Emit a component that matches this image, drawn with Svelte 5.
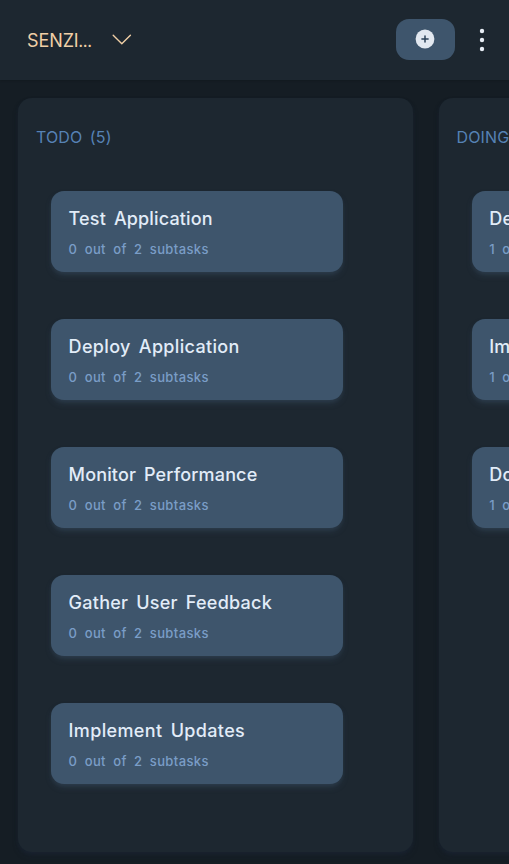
<script>
  const columns = [
    {
      title: 'TODO (5)',
      tasks: [
        { name: 'Test Application', done: 0, tracking: 0.15 },
        { name: 'Deploy Application', done: 0, tracking: 0.33 },
        { name: 'Monitor Performance', done: 0, tracking: 0.15 },
        { name: 'Gather User Feedback', done: 0, tracking: 0.24 },
        { name: 'Implement Updates', done: 0, tracking: 0.36 }
      ]
    },
    {
      title: 'DOING (3)',
      tasks: [
        { name: 'Design', done: 1, tracking: 0.2 },
        { name: 'Implement', done: 1, tracking: 0.2 },
        { name: 'Document', done: 1, tracking: 0.2 }
      ]
    }
  ];
</script>

<div class="app">
  <header>
    <button class="board">
      <span class="name">SENZI<span class="dots">…</span></span>
      <svg width="20" height="12" viewBox="0 0 20 12" fill="none" stroke="currentColor" stroke-width="1.4" stroke-linecap="round" stroke-linejoin="round">
        <path d="M1.2 1.2 9.8 9.7 18.4 1.2" />
      </svg>
    </button>
    <div class="actions">
      <button class="add" aria-label="Add task">
        <svg width="20" height="20" viewBox="0 0 20 20">
          <circle cx="10" cy="10" r="9.4" fill="#e2e8f0" />
          <path d="M10 6.9v6.2M6.9 10h6.2" stroke="#2b4057" stroke-width="1.5" stroke-linecap="round" />
        </svg>
      </button>
      <button class="more" aria-label="More options">
        <svg width="6" height="24" viewBox="0 0 6 24" fill="#e8eef6">
          <circle cx="3" cy="3" r="2.2" />
          <circle cx="3" cy="12" r="2.2" />
          <circle cx="3" cy="21" r="2.2" />
        </svg>
      </button>
    </div>
  </header>
  <main>
    {#each columns as column}
      <section>
        <h2>{column.title}</h2>
        <div class="tasks">
          {#each column.tasks as task}
            <article>
              <h3 style="letter-spacing: {task.tracking}px">{task.name}</h3>
              <p>{task.done} out of 2 subtasks</p>
            </article>
          {/each}
        </div>
      </section>
    {/each}
  </main>
</div>

<style>
  :global(body) {
    margin: 0;
    background: #151d24;
  }
  .app {
    height: 864px;
    overflow: hidden;
    display: flex;
    flex-direction: column;
    background: #151d24;
    font-family: Inter, 'Liberation Sans', sans-serif;
  }
  header {
    box-sizing: border-box;
    height: 80px;
    flex: none;
    display: flex;
    align-items: center;
    justify-content: space-between;
    padding: 0 24px 1px 27px;
    background: #1d2730;
    box-shadow: 0 1px 2px rgba(0, 0, 0, 0.15);
  }
  button {
    border: 0;
    padding: 0;
    background: none;
    font: inherit;
    color: inherit;
  }
  .board {
    display: flex;
    align-items: center;
    color: #f0cfa6;
  }
  .name {
    width: 85px;
    padding-top: 3px;
    text-align: left;
    font-size: 18px;
    line-height: 24px;
    letter-spacing: -0.1px;
    white-space: nowrap;
  }
  .dots {
    font-size: 14px;
    font-weight: 600;
    letter-spacing: -0.6px;
  }
  .actions {
    display: flex;
    align-items: center;
    gap: 24px;
  }
  .add {
    box-sizing: border-box;
    display: flex;
    align-items: center;
    justify-content: center;
    width: 59px;
    height: 41px;
    padding: 0 1px 1px 0;
    border-radius: 13px;
    background: #3e556c;
  }
  .more {
    display: flex;
    padding-top: 1px;
  }
  main {
    flex: 1;
    display: flex;
    gap: 26px;
    padding: 18px 0 12px 18px;
  }
  section {
    box-sizing: border-box;
    flex: none;
    width: 394.6px;
    padding: 27px 18px;
    border-radius: 14px;
    background: #1d2730;
    box-shadow: 0 4px 6px -1px rgba(30, 41, 59, 0.4), 0 2px 4px -1px rgba(30, 41, 59, 0.3);
  }
  h2 {
    margin: 0;
    font-size: 16px;
    line-height: 24px;
    font-weight: 400;
    letter-spacing: 0.1px;
    color: #5682b5;
    word-spacing: 3px;
  }
  .tasks {
    display: flex;
    flex-direction: column;
    gap: 47px;
    padding: 42px 0 0 15px;
  }
  article {
    box-sizing: border-box;
    width: 292px;
    height: 81px;
    padding: 15px 17.6px;
    border-radius: 13px;
    background: #3e556c;
    box-shadow: 0 4px 6px -1px rgba(62, 85, 108, 0.4), 0 2px 4px -1px rgba(62, 85, 108, 0.2);
    white-space: nowrap;
  }
  h3 {
    margin: 0;
    font-size: 18px;
    line-height: 26px;
    font-weight: 500;
    color: #e2ecf8;
    word-spacing: 3px;
  }
  p {
    margin: 7px 0 0;
    font-size: 13px;
    line-height: 20px;
    font-weight: 500;
    letter-spacing: 0.37px;
    color: #7a9dc7;
    word-spacing: 3.5px;
  }
</style>
